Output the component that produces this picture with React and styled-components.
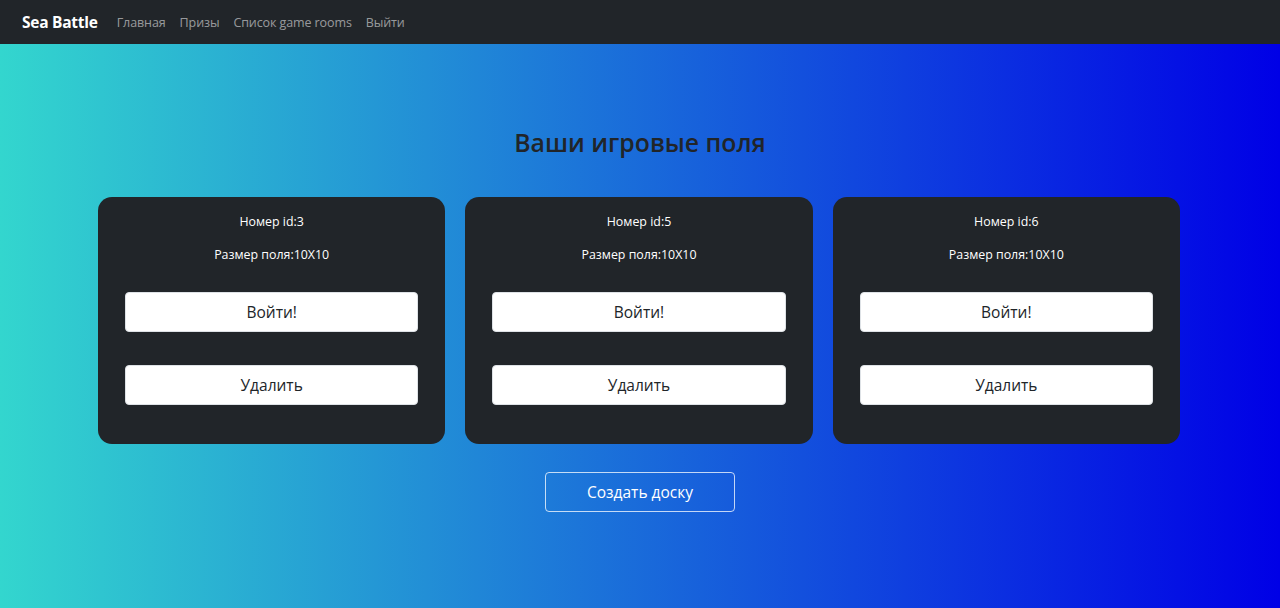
import React from "react";
import styled, { createGlobalStyle } from "styled-components";

const Global = createGlobalStyle`
  html, body { margin: 0; padding: 0; }
  body {
    font-family: "Open Sans", "Noto Sans", "Liberation Sans", sans-serif;
    background: #212529;
  }
  * { box-sizing: border-box; }
`;

const Nav = styled.nav`
  height: 44px;
  background: #212529;
  display: flex;
  align-items: center;
  padding: 0 22px;
`;

const Brand = styled.a`
  color: #fff;
  font-size: 15.5px;
  font-weight: 700;
  margin-right: 19px;
  letter-spacing: -0.25px;
`;

const NavLinks = styled.div`
  display: flex;
  gap: 14px;
`;

const NavLink = styled.a`
  color: rgba(255, 255, 255, 0.55);
  font-size: 12.5px;
  letter-spacing: -0.1px;
`;

const Main = styled.main`
  min-height: calc(100vh - 44px);
  background: linear-gradient(90deg, #33d6ce 0%, #0000e6 100%);
  display: flex;
  flex-direction: column;
  align-items: center;
  padding-top: 82px;
  padding-bottom: 96px;
`;

const Title = styled.h2`
  margin: 0 0 39px;
  font-size: 24.8px;
  font-weight: 600;
  color: #212529;
  line-height: 32px;
`;

const Cards = styled.div`
  width: 1082px;
  margin-left: -2px;
  display: grid;
  grid-template-columns: repeat(3, 1fr);
  column-gap: 20px;
`;

const Card = styled.div`
  background: #212529;
  border-radius: 14px;
  height: 247px;
  padding: 16px 27px 0;
  display: flex;
  flex-direction: column;
  align-items: stretch;
  color: #fff;
`;

const Info = styled.p`
  margin: 0 0 ${(p) => p.$mb}px;
  text-align: center;
  font-size: 12.4px;
  line-height: 18px;
`;

const WhiteButton = styled.button`
  height: 40px;
  background: #fff;
  border: 1px solid #dee2e6;
  border-radius: 4px;
  font-family: inherit;
  font-size: 15.5px;
  color: #212529;
  margin-bottom: ${(p) => p.$mb}px;
  cursor: pointer;
`;

const CreateButton = styled.button`
  margin-top: 28px;
  width: 190px;
  height: 40px;
  background: transparent;
  border: 1px solid rgba(255, 255, 255, 0.75);
  border-radius: 4px;
  color: #fff;
  font-family: inherit;
  font-size: 15.5px;
  cursor: pointer;
`;

const boards = [3, 5, 6];

export default function App() {
  return (
    <>
      <Global />
      <Nav>
        <Brand>Sea Battle</Brand>
        <NavLinks>
          <NavLink>Главная</NavLink>
          <NavLink>Призы</NavLink>
          <NavLink>Cписок game rooms</NavLink>
          <NavLink>Выйти</NavLink>
        </NavLinks>
      </Nav>
      <Main>
        <Title>Ваши игровые поля</Title>
        <Cards>
          {boards.map((id) => (
            <Card key={id}>
              <Info $mb={15}>Номер id:{id}</Info>
              <Info $mb={28}>Размер поля:10X10</Info>
              <WhiteButton $mb={33}>Войти!</WhiteButton>
              <WhiteButton $mb={0}>Удалить</WhiteButton>
            </Card>
          ))}
        </Cards>
        <CreateButton>Создать доску</CreateButton>
      </Main>
    </>
  );
}
